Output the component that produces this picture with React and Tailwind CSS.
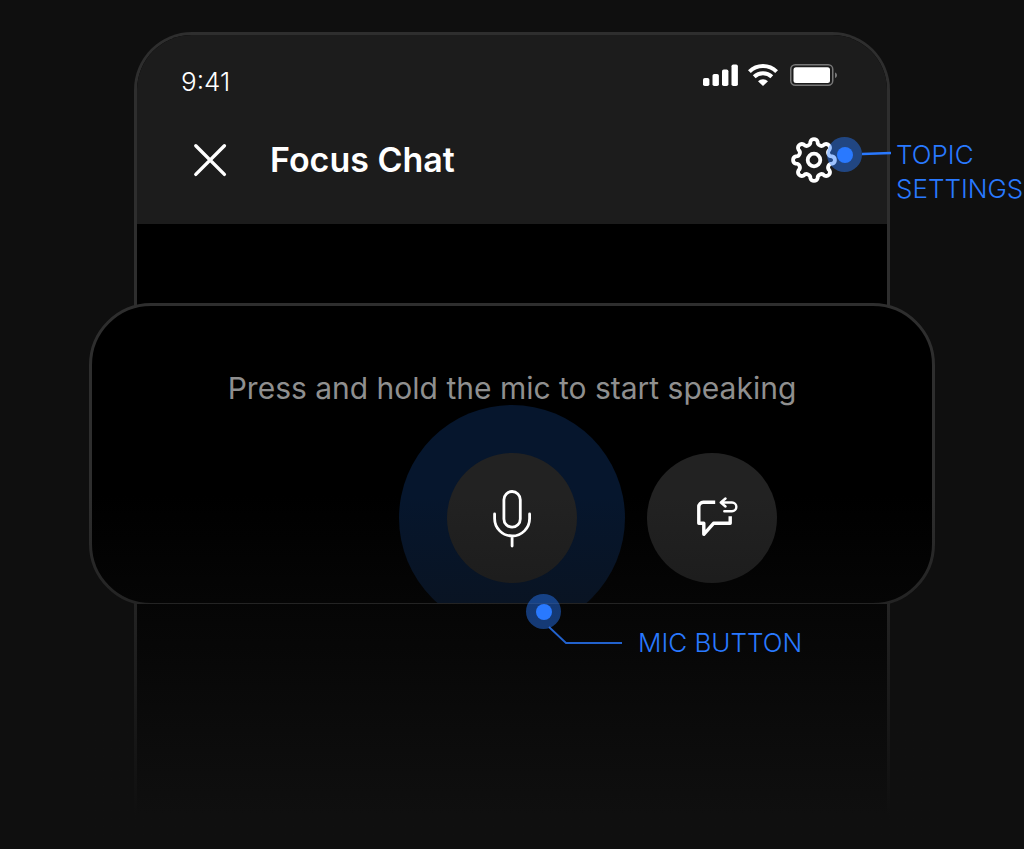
const GEAR_TEETH = 8;

// alternating convex / concave arcs around a circle
function gearPath(cx, cy, r, bump) {
  const count = GEAR_TEETH * 2;
  let d = '';
  for (let i = 0; i <= count; i++) {
    const a = ((i - 0.5) * 2 * Math.PI) / count;
    const x = (cx + r * Math.cos(a)).toFixed(2);
    const y = (cy + r * Math.sin(a)).toFixed(2);
    d += i === 0 ? `M${x} ${y}` : `A${bump} ${bump} 0 0 ${i % 2} ${x} ${y}`;
  }
  return d + 'Z';
}

function StatusIcons() {
  return (
    <svg width="136" height="24" viewBox="0 0 136 24" fill="none" aria-hidden="true">
      <g fill="#fff">
        <rect x="1" y="15" width="6.4" height="8" rx="1.8" />
        <rect x="10.5" y="11" width="6.4" height="12" rx="1.8" />
        <rect x="20" y="6.5" width="6.4" height="16.5" rx="1.8" />
        <rect x="29.5" y="1.5" width="6.4" height="21.5" rx="1.8" />
        <path d="M61 23 56 18.2a7.2 7.2 0 0 1 10 0Z" />
      </g>
      <path d="M47.4 8.6a19.6 19.6 0 0 1 27.2 0M52.2 13.8a12.8 12.8 0 0 1 17.6 0" stroke="#fff" strokeWidth="4" />
      <rect x="88.75" y="1.75" width="42" height="20.5" rx="4.5" stroke="#777" strokeWidth="1.5" />
      <rect x="91.5" y="4.2" width="36.5" height="15.7" rx="2.5" fill="#fff" />
      <path d="M133 9.5c1.6.6 2 1.7 2 2.8s-.4 2.2-2 2.8Z" fill="#777" />
    </svg>
  );
}

function CloseIcon() {
  return (
    <svg width="48" height="48" viewBox="0 0 48 48" fill="none" stroke="#fff" strokeWidth="3.4" strokeLinecap="round">
      <path d="M9.8 9.8 38.4 38.4M38.4 9.8 9.8 38.4" />
    </svg>
  );
}

function GearIcon() {
  return (
    <svg width="46" height="46" viewBox="0 0 46 46" fill="none" stroke="#fff" strokeWidth="3.8" strokeLinejoin="round">
      <path d={gearPath(23, 23, 18.6, 3.8)} />
      <circle cx="23" cy="23" r="6.3" />
    </svg>
  );
}

function MicIcon() {
  return (
    <svg width="44" height="64" viewBox="0 0 44 64" fill="none" stroke="#fff" strokeWidth="2.8" strokeLinecap="round" className="relative z-20">
      <rect x="13.9" y="5.5" width="16.4" height="35.6" rx="8.2" />
      <path d="M4.6 28v4.5a17.5 17.5 0 0 0 35 0V28M22.1 50.4v9.6" />
    </svg>
  );
}

function ReplyIcon() {
  return (
    <svg width="48" height="44" viewBox="-1 1 48 44" fill="none" stroke="#fff" strokeLinejoin="round" className="relative z-20 ml-1">
      <path strokeWidth="3.4" d="M24.2 7.3H12.3a4.5 4.5 0 0 0-4.5 4.5V28.3H12.8V39.3L22.5 28.3H39.2V21.3" />
      <path strokeWidth="2.4" strokeLinecap="round" d="M34.5 3.5 29.8 7.5 34.5 11.5M29.8 7.5H41a4.3 4.3 0 0 1 0 8.7H33.3" />
    </svg>
  );
}

function Marker() {
  return (
    <span className="flex size-[35px] shrink-0 items-center justify-center rounded-full bg-[#2979ff]/45">
      <span className="size-4 rounded-full bg-[#2979ff]" />
    </span>
  );
}

function App() {
  return (
    <main className="flex min-h-screen flex-col overflow-hidden bg-[#0f0f0f] pt-8 font-['Inter',sans-serif]">
      <div className="relative mx-auto flex w-full max-w-[756px] flex-1 flex-col rounded-t-[58px] border-x-[3px] border-t-[3px] border-[#2e2e2e] bg-black">
        <header className="rounded-t-[55px] bg-[#1c1c1c] pt-7 pb-10">
          <div className="flex items-start justify-between pr-[49px] pl-11">
            <span className="text-[26px] leading-[38px] font-light text-white">9:41</span>
            <StatusIcons />
          </div>
          <div className="mt-[35px] flex items-center justify-between pr-[50px] pl-[49px]">
            <div className="flex items-center gap-9">
              <button type="button" aria-label="Close">
                <CloseIcon />
              </button>
              <h1 className="text-[34px] leading-[48px] font-semibold text-white">Focus Chat</h1>
            </div>
            <div className="relative">
              <button type="button" aria-label="Topic settings" className="block">
                <GearIcon />
              </button>
              <div className="absolute top-0 left-9 z-20 flex items-start">
                <Marker />
                <svg width="34" height="35" viewBox="0 0 34 35" className="shrink-0" aria-hidden="true">
                  <path d="M0 17 29 16" stroke="#2979ff" strokeWidth="2.5" />
                </svg>
                <p className="mt-px w-32 text-[26px] leading-[34px] font-light text-[#2979ff]">TOPIC SETTINGS</p>
              </div>
            </div>
          </div>
        </header>

        <section className="relative -mx-12 mt-[79px] overflow-hidden rounded-[62px] border-[3px] border-[#2e2e2e] bg-black px-6 pt-[58px] pb-5">
          <p className="text-center text-[30px] leading-[48px] text-[#8f8f8f]">Press and hold the mic to start speaking</p>
          <div className="mt-[41px] grid grid-cols-[130px_130px_130px] justify-center gap-[70px]">
            <div className="relative col-start-2">
              <span className="absolute -inset-12 rounded-full bg-[#06162d]" />
              <button type="button" aria-label="Mic" className="relative flex size-[130px] items-center justify-center rounded-full bg-[#222]">
                <MicIcon />
              </button>
            </div>
            <button type="button" aria-label="Reply" className="flex size-[130px] items-center justify-center rounded-full bg-[#222]">
              <ReplyIcon />
            </button>
          </div>
        </section>

        <section className="relative -mt-0.5 min-h-60 flex-1 bg-black">
          <div className="absolute -top-2.5 left-1/2 z-20 ml-3.5 flex">
            <Marker />
            <svg width="77" height="64" viewBox="0 0 77 64" fill="none" className="-ml-3.5 shrink-0" aria-hidden="true">
              <path d="M2 33 19 49H75" stroke="#2979ff" strokeOpacity=".8" strokeWidth="1.8" />
            </svg>
            <p className="mt-8 ml-3.5 text-[26px] leading-[34px] font-light whitespace-nowrap text-[#2979ff]">MIC BUTTON</p>
          </div>
        </section>

        {/* fades the lower part of the phone into the page */}
        <div className="pointer-events-none absolute -inset-x-14 top-[460px] bottom-0 z-10 bg-linear-to-b from-transparent to-[#0f0f0f] to-[320px]" />
      </div>
    </main>
  );
}

export default App;
